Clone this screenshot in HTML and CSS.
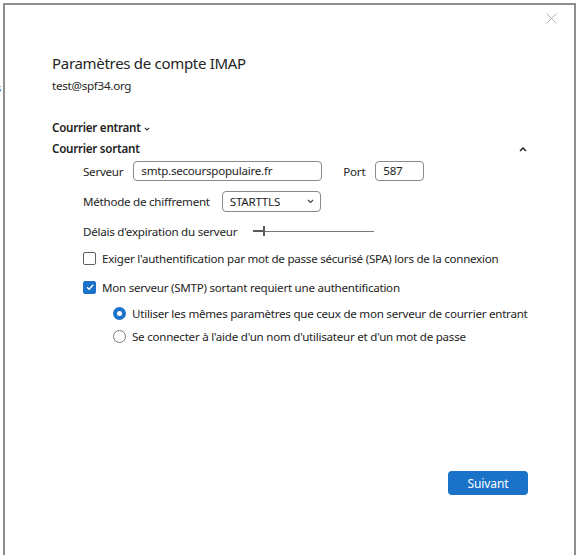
FILE: index.html
```html
<!DOCTYPE html>
<html lang="fr">
<head>
<meta charset="utf-8">
<title>Paramètres de compte IMAP</title>
<link rel="stylesheet" href="styles.css">
</head>
<body>
<div class="screen">
  <div class="behind">
    <span class="frag f1">s</span>
    <span class="frag f2">l</span>
  </div>
  <div class="window">
    <div class="topbar">
      <span class="close" aria-label="Fermer">
        <svg width="11" height="11" viewBox="0 0 11 11"><path d="M0.5 0.5 L10.5 10.5 M10.5 0.5 L0.5 10.5" stroke="#b4b4b4" stroke-width="1" fill="none"/></svg>
      </span>
    </div>
    <div class="content">
      <h1 class="title">Paramètres de compte IMAP</h1>
      <div class="email">test@spf34.org</div>

      <div class="section-h entrant">Courrier entrant
        <svg class="chev" width="6" height="4" viewBox="0 0 6 4"><path d="M0.8 0.8 L3 3 L5.2 0.8" stroke="#333" stroke-width="1.1" fill="none"/></svg>
      </div>
      <div class="section-h sortant">
        <span>Courrier sortant</span>
        <svg class="caret" width="8" height="5" viewBox="0 0 8 5"><path d="M1 4 L4 1 L7 4" stroke="#222" stroke-width="1.5" fill="none"/></svg>
      </div>

      <div class="form">
        <div class="row r-server">
          <span class="lbl">Serveur</span>
          <span class="field server">smtp.secourspopulaire.fr</span>
          <span class="lbl port-lbl">Port</span>
          <span class="field port">587</span>
        </div>
        <div class="row r-method">
          <span class="lbl">Méthode de chiffrement</span>
          <span class="field select">STARTTLS
            <svg class="sel-chev" width="7" height="5" viewBox="0 0 7 5"><path d="M1 1 L3.5 3.5 L6 1" stroke="#444" stroke-width="1.1" fill="none"/></svg>
          </span>
        </div>
        <div class="row r-timeout">
          <span class="lbl">Délais d'expiration du serveur</span>
          <span class="slider">
            <span class="fill"></span>
            <span class="thumb"></span>
            <span class="track"></span>
          </span>
        </div>
        <div class="row check-row r-spa">
          <span class="box"></span>
          <span class="txt">Exiger l'authentification par mot de passe sécurisé (SPA) lors de la connexion</span>
        </div>
        <div class="row check-row r-auth">
          <span class="box checked">
            <svg width="10" height="10" viewBox="0 0 10 10"><path d="M2 5.2 L4.1 7.2 L8.2 2.8" stroke="#fff" stroke-width="1.4" fill="none"/></svg>
          </span>
          <span class="txt">Mon serveur (SMTP) sortant requiert une authentification</span>
        </div>
        <div class="radios">
          <div class="row radio-row first">
            <span class="radio on"></span>
            <span class="txt">Utiliser les mêmes paramètres que ceux de mon serveur de courrier entrant</span>
          </div>
          <div class="row radio-row second">
            <span class="radio"></span>
            <span class="txt">Se connecter à l'aide d'un nom d'utilisateur et d'un mot de passe</span>
          </div>
        </div>
      </div>

      <div class="footer">
        <button class="next">Suivant</button>
      </div>
    </div>
  </div>
</div>
</body>
</html>
```

FILE: styles.css
```css
* { box-sizing: border-box; }

html, body {
  margin: 0;
  padding: 0;
  background: #ffffff;
}

body {
  font-family: "Noto Sans", "Open Sans", sans-serif;
  color: #242424;
  font-size: 11.6px;
  letter-spacing: -0.25px;
  width: 577px;
  height: 555px;
  overflow: hidden;
}

.screen {
  display: flex;
  height: 555px;
}

.behind {
  width: 3px;
  overflow: hidden;
  display: flex;
  flex-direction: column;
  font-size: 11px;
  color: #555;
}

.frag {
  display: block;
  margin-left: -4px;
  line-height: 12px;
}
.f1 { margin-top: 82px; }
.f2 { margin-top: 88px; color: #222; }

.window {
  margin-top: 3px;
  width: 573px;
  border-top: 2px solid #8e8e8e;
  border-left: 2px solid #8e8e8e;
  border-right: 2px solid #8e8e8e;
  background: #ffffff;
  display: flex;
  flex-direction: column;
}

.topbar {
  height: 30px;
  display: flex;
  justify-content: flex-end;
  align-items: flex-start;
  padding: 8px 17px 0 0;
}

.close {
  display: block;
  width: 11px;
  height: 11px;
}
.close svg { display: block; }

.content {
  padding: 18px 46px 0 47px;
  display: flex;
  flex-direction: column;
}

.title {
  margin: 0;
  font-size: 15px;
  font-weight: 400;
  letter-spacing: -0.3px;
  line-height: 20px;
  color: #242424;
}

.email {
  margin-top: 5px;
  line-height: 16px;
}

.section-h {
  font-weight: 600;
  line-height: 16px;
  display: flex;
  align-items: center;
}

.entrant {
  margin-top: 26px;
  gap: 3px;
}
.chev { margin-top: 1px; }

.sortant {
  margin-top: 5px;
  justify-content: space-between;
  padding-right: 1px;
}

.form {
  padding-left: 31px;
  display: flex;
  flex-direction: column;
}

.row {
  display: flex;
  align-items: center;
}

.r-server { margin-top: 4px; height: 20px; }
.r-method { margin-top: 10px; height: 21px; }
.r-timeout { margin-top: 11px; height: 16px; }

.lbl { white-space: nowrap; }

.field {
  height: 20px;
  border: 1px solid #8a8a8a;
  border-radius: 4px;
  padding: 0 7px;
  display: flex;
  align-items: center;
  line-height: 16px;
  color: #242424;
}

.server {
  margin-left: 10px;
  width: 189px;
}

.port-lbl { margin-left: 21px; }

.port {
  margin-left: 10px;
  width: 49px;
}

.select {
  margin-left: 12px;
  width: 99px;
  height: 21px;
  justify-content: space-between;
  padding-right: 6px;
}

.slider {
  margin-left: 16px;
  width: 121px;
  height: 12px;
  display: flex;
  align-items: center;
}
.slider .fill {
  width: 10px;
  height: 2px;
  background: #5a5a5a;
}
.slider .thumb {
  width: 2px;
  height: 10px;
  background: #5a5a5a;
}
.slider .track {
  flex: 1;
  height: 1px;
  background: #777;
}

.check-row { height: 16px; gap: 6px; }
.r-spa { margin-top: 11px; }
.r-auth { margin-top: 13px; }

.box {
  width: 13px;
  height: 13px;
  border: 1px solid #616161;
  border-radius: 2px;
  display: flex;
  align-items: center;
  justify-content: center;
  flex: none;
}
.box.checked {
  background: #1a73c9;
  border-color: #1a73c9;
}
.box svg { display: block; }

.radios {
  padding-left: 30px;
  display: flex;
  flex-direction: column;
}
.radio-row {
  height: 16px;
  gap: 6px;
}
.radio-row.first { margin-top: 10px; }
.radio-row.second { margin-top: 7px; }

.radio {
  width: 13px;
  height: 13px;
  border-radius: 50%;
  border: 1px solid #7a7a7a;
  flex: none;
}
.radio.on {
  border: 4px solid #1a73c9;
  background: #fff;
}

.footer {
  display: flex;
  justify-content: flex-end;
  margin-top: 127px;
}

.next {
  width: 80px;
  height: 24px;
  border: none;
  border-radius: 4px;
  background: #1a73c9;
  color: #ffffff;
  font-family: "Noto Sans", "Open Sans", sans-serif;
  font-size: 12px;
  letter-spacing: -0.1px;
  padding: 0;
  cursor: pointer;
}
```
